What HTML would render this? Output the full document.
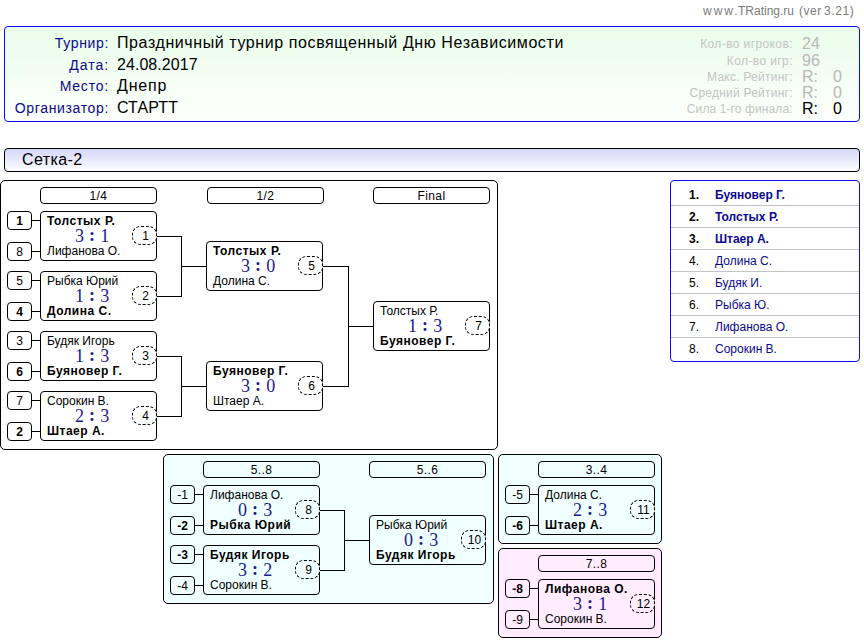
<!DOCTYPE html>
<html><head><meta charset="utf-8"><style>
*{margin:0;padding:0;box-sizing:border-box}
html,body{width:864px;height:642px;overflow:hidden;background:#fff;font-family:"Liberation Sans", sans-serif}
.a{position:absolute}
.t{position:absolute;white-space:nowrap;line-height:1}
.box{position:absolute;border:1px solid #000;border-radius:5px}
.lbl{position:absolute;border:1px solid #000;border-radius:4px;height:17px;width:117px;text-align:center;font-size:12px;line-height:17px;letter-spacing:0.4px;color:#000}
.seed{position:absolute;border:1px solid #000;border-radius:4px;width:25px;height:19px;text-align:center;font-size:12px;line-height:19px;color:#000;background:transparent}
.m{position:absolute;border:1px solid #000;border-radius:4px;width:117px;height:50px}
.n{position:absolute;left:6px;font-size:12px;line-height:12px;white-space:nowrap;color:#000}
.b{font-weight:bold;letter-spacing:0.5px}
.sc{position:absolute;left:34px;top:16px;font-family:"Liberation Serif", serif;font-size:18px;line-height:17px;letter-spacing:0.3px;color:#1a1a90;white-space:nowrap}
.no{position:absolute;left:91px;top:14px;width:25px;height:19px;border:1px dashed #000;border-radius:9px/8px;text-align:center;font-size:12px;line-height:19px;padding-left:2px;color:#000;background:#fff}
.c{position:relative;top:-1.5px}
.hl{position:absolute;height:1px;background:#000}
.vl{position:absolute;width:1px;background:#000}
</style></head>
<body>
<div class="t" style="left:703px;top:5px;font-size:12px;letter-spacing:2.0px;color:#7a7a7a">www.</div>
<div class="t" style="left:738px;top:5px;font-size:12px;letter-spacing:0.0px;color:#7a7a7a">TRating.ru</div>
<div class="t" style="left:799px;top:5px;font-size:12px;letter-spacing:0.5px;color:#7a7a7a">(ver</div>
<div class="t" style="left:824px;top:5px;font-size:12px;letter-spacing:0.6px;color:#7a7a7a">3.21)</div>
<div class="a" style="left:4px;top:26px;width:856px;height:96px;border:1px solid #0a0af8;border-radius:4px;background:linear-gradient(#e9fde9,#fdfffd)"></div>
<div class="t" style="right:755px;top:36.0px;font-size:14px;letter-spacing:0.65px;color:#0a0a8a;text-align:right">Турнир:</div>
<div class="t" style="left:117px;top:35.0px;font-size:16px;letter-spacing:0.59px;color:#000">Праздничный турнир посвященный Дню Независимости</div>
<div class="t" style="right:755px;top:57.5px;font-size:14px;letter-spacing:0.95px;color:#0a0a8a;text-align:right">Дата:</div>
<div class="t" style="left:117px;top:56.5px;font-size:16px;letter-spacing:0.05px;color:#000">24.08.2017</div>
<div class="t" style="right:755px;top:79.0px;font-size:14px;letter-spacing:0.8px;color:#0a0a8a;text-align:right">Место:</div>
<div class="t" style="left:117px;top:78.0px;font-size:16px;letter-spacing:0.8px;color:#000">Днепр</div>
<div class="t" style="right:755px;top:100.5px;font-size:14px;letter-spacing:0.65px;color:#0a0a8a;text-align:right">Организатор:</div>
<div class="t" style="left:117px;top:99.5px;font-size:16px;letter-spacing:0.1px;color:#000">СТАРТТ</div>
<div class="t" style="right:71.11px;top:38px;font-size:12px;letter-spacing:0.39px;color:#c4c4c4">Кол-во игроков:</div>
<div class="t" style="left:802px;top:36px;font-size:16px;color:#b8b8b8">24</div>
<div class="t" style="right:71.1px;top:55.4px;font-size:12px;letter-spacing:0.4px;color:#c4c4c4">Кол-во игр:</div>
<div class="t" style="left:802px;top:53.4px;font-size:16px;color:#b8b8b8">96</div>
<div class="t" style="right:71.25px;top:70.8px;font-size:12px;letter-spacing:0.25px;color:#c4c4c4">Макс. Рейтинг:</div>
<div class="t" style="left:802px;top:68.8px;font-size:16px;color:#b8b8b8">R:</div>
<div class="t" style="left:833px;top:68.8px;font-size:16px;color:#b8b8b8">0</div>
<div class="t" style="right:71.27px;top:87.2px;font-size:12px;letter-spacing:0.23px;color:#c4c4c4">Средний Рейтинг:</div>
<div class="t" style="left:802px;top:85.2px;font-size:16px;color:#b8b8b8">R:</div>
<div class="t" style="left:833px;top:85.2px;font-size:16px;color:#b8b8b8">0</div>
<div class="t" style="right:71.4px;top:103.2px;font-size:12px;letter-spacing:0.1px;color:#c4c4c4">Сила 1-го финала:</div>
<div class="t" style="left:802px;top:101.2px;font-size:16px;color:#000">R:</div>
<div class="t" style="left:833px;top:101.2px;font-size:16px;color:#000">0</div>
<div class="a" style="left:4px;top:148px;width:856px;height:24px;border:1px solid #000;border-radius:4px;background:linear-gradient(#d6d6f8,#fcfcff)"></div>
<div class="t" style="left:22px;top:152px;font-size:16px;letter-spacing:0.4px;color:#000">Сетка-2</div>
<div class="box" style="left:0px;top:180px;width:498px;height:270px;background:#fff"></div>
<div class="lbl" style="left:40px;top:187px">1/4</div>
<div class="lbl" style="left:207px;top:187px">1/2</div>
<div class="lbl" style="left:373px;top:187px">Final</div>
<div class="seed" style="left:7px;top:211px;font-weight:bold">1</div>
<div class="seed" style="left:7px;top:242px;">8</div>
<div class="hl" style="left:32px;top:220px;width:8px"></div>
<div class="hl" style="left:32px;top:251px;width:8px"></div>
<div class="m" style="left:40px;top:211px;background:#fff"><div class="n b" style="top:3px">Толстых Р.</div><div class="sc">3 <b class=c>:</b> 1</div><div class="n" style="top:33px">Лифанова О.</div><div class="no" style="background:#fff">1</div></div>
<div class="seed" style="left:7px;top:271px;">5</div>
<div class="seed" style="left:7px;top:302px;font-weight:bold">4</div>
<div class="hl" style="left:32px;top:280px;width:8px"></div>
<div class="hl" style="left:32px;top:311px;width:8px"></div>
<div class="m" style="left:40px;top:271px;background:#fff"><div class="n" style="top:3px">Рыбка Юрий</div><div class="sc">1 <b class=c>:</b> 3</div><div class="n b" style="top:33px">Долина С.</div><div class="no" style="background:#fff">2</div></div>
<div class="seed" style="left:7px;top:331px;">3</div>
<div class="seed" style="left:7px;top:362px;font-weight:bold">6</div>
<div class="hl" style="left:32px;top:340px;width:8px"></div>
<div class="hl" style="left:32px;top:371px;width:8px"></div>
<div class="m" style="left:40px;top:331px;background:#fff"><div class="n" style="top:3px">Будяк Игорь</div><div class="sc">1 <b class=c>:</b> 3</div><div class="n b" style="top:33px">Буяновер Г.</div><div class="no" style="background:#fff">3</div></div>
<div class="seed" style="left:7px;top:391px;">7</div>
<div class="seed" style="left:7px;top:422px;font-weight:bold">2</div>
<div class="hl" style="left:32px;top:400px;width:8px"></div>
<div class="hl" style="left:32px;top:431px;width:8px"></div>
<div class="m" style="left:40px;top:391px;background:#fff"><div class="n" style="top:3px">Сорокин В.</div><div class="sc">2 <b class=c>:</b> 3</div><div class="n b" style="top:33px">Штаер А.</div><div class="no" style="background:#fff">4</div></div>
<div class="hl" style="left:157px;top:236px;width:25px"></div>
<div class="hl" style="left:157px;top:296px;width:25px"></div>
<div class="vl" style="left:181px;top:236px;height:61px"></div>
<div class="hl" style="left:181px;top:266px;width:25px"></div>
<div class="hl" style="left:157px;top:356px;width:25px"></div>
<div class="hl" style="left:157px;top:416px;width:25px"></div>
<div class="vl" style="left:181px;top:356px;height:61px"></div>
<div class="hl" style="left:181px;top:386px;width:25px"></div>
<div class="m" style="left:206px;top:241px;background:#fff"><div class="n b" style="top:3px">Толстых Р.</div><div class="sc">3 <b class=c>:</b> 0</div><div class="n" style="top:33px">Долина С.</div><div class="no" style="background:#fff">5</div></div>
<div class="m" style="left:206px;top:361px;background:#fff"><div class="n b" style="top:3px">Буяновер Г.</div><div class="sc">3 <b class=c>:</b> 0</div><div class="n" style="top:33px">Штаер А.</div><div class="no" style="background:#fff">6</div></div>
<div class="hl" style="left:323px;top:266px;width:26px"></div>
<div class="hl" style="left:323px;top:386px;width:26px"></div>
<div class="vl" style="left:348px;top:266px;height:121px"></div>
<div class="hl" style="left:348px;top:326px;width:25px"></div>
<div class="m" style="left:373px;top:301px;background:#fff"><div class="n" style="top:3px">Толстых Р.</div><div class="sc">1 <b class=c>:</b> 3</div><div class="n b" style="top:33px">Буяновер Г.</div><div class="no" style="background:#fff">7</div></div>
<div class="a" style="left:670px;top:180px;width:190px;height:182px;border:1px solid #0a0af8;border-radius:4px;background:#fff"></div>
<div class="t" style="left:689px;top:189px;font-size:12px;font-weight:bold;color:#000">1.</div>
<div class="t" style="left:715px;top:189px;font-size:12px;font-weight:bold;color:#0a0a90">Буяновер Г.</div>
<div class="hl" style="left:671px;top:205px;width:188px;background:#c4c4c4"></div>
<div class="t" style="left:689px;top:211px;font-size:12px;font-weight:bold;color:#000">2.</div>
<div class="t" style="left:715px;top:211px;font-size:12px;font-weight:bold;color:#0a0a90">Толстых Р.</div>
<div class="hl" style="left:671px;top:227px;width:188px;background:#c4c4c4"></div>
<div class="t" style="left:689px;top:233px;font-size:12px;font-weight:bold;color:#000">3.</div>
<div class="t" style="left:715px;top:233px;font-size:12px;font-weight:bold;color:#0a0a90">Штаер А.</div>
<div class="hl" style="left:671px;top:249px;width:188px;background:#c4c4c4"></div>
<div class="t" style="left:689px;top:255px;font-size:12px;font-weight:normal;color:#000">4.</div>
<div class="t" style="left:715px;top:255px;font-size:12px;font-weight:normal;color:#0a0a90">Долина С.</div>
<div class="hl" style="left:671px;top:271px;width:188px;background:#c4c4c4"></div>
<div class="t" style="left:689px;top:277px;font-size:12px;font-weight:normal;color:#000">5.</div>
<div class="t" style="left:715px;top:277px;font-size:12px;font-weight:normal;color:#0a0a90">Будяк И.</div>
<div class="hl" style="left:671px;top:293px;width:188px;background:#c4c4c4"></div>
<div class="t" style="left:689px;top:299px;font-size:12px;font-weight:normal;color:#000">6.</div>
<div class="t" style="left:715px;top:299px;font-size:12px;font-weight:normal;color:#0a0a90">Рыбка Ю.</div>
<div class="hl" style="left:671px;top:315px;width:188px;background:#c4c4c4"></div>
<div class="t" style="left:689px;top:321px;font-size:12px;font-weight:normal;color:#000">7.</div>
<div class="t" style="left:715px;top:321px;font-size:12px;font-weight:normal;color:#0a0a90">Лифанова О.</div>
<div class="hl" style="left:671px;top:337px;width:188px;background:#c4c4c4"></div>
<div class="t" style="left:689px;top:343px;font-size:12px;font-weight:normal;color:#000">8.</div>
<div class="t" style="left:715px;top:343px;font-size:12px;font-weight:normal;color:#0a0a90">Сорокин В.</div>
<div class="box" style="left:163px;top:454px;width:331px;height:150px;background:#f0ffff"></div>
<div class="lbl" style="left:203px;top:461px">5..8</div>
<div class="lbl" style="left:369px;top:461px">5..6</div>
<div class="seed" style="left:170px;top:485px;">-1</div>
<div class="seed" style="left:170px;top:516px;font-weight:bold">-2</div>
<div class="hl" style="left:195px;top:494px;width:8px"></div>
<div class="hl" style="left:195px;top:525px;width:8px"></div>
<div class="m" style="left:203px;top:485px;background:#f0ffff"><div class="n" style="top:3px">Лифанова О.</div><div class="sc">0 <b class=c>:</b> 3</div><div class="n b" style="top:33px">Рыбка Юрий</div><div class="no" style="background:#f0ffff">8</div></div>
<div class="seed" style="left:170px;top:545px;font-weight:bold">-3</div>
<div class="seed" style="left:170px;top:576px;">-4</div>
<div class="hl" style="left:195px;top:554px;width:8px"></div>
<div class="hl" style="left:195px;top:585px;width:8px"></div>
<div class="m" style="left:203px;top:545px;background:#f0ffff"><div class="n b" style="top:3px">Будяк Игорь</div><div class="sc">3 <b class=c>:</b> 2</div><div class="n" style="top:33px">Сорокин В.</div><div class="no" style="background:#f0ffff">9</div></div>
<div class="hl" style="left:320px;top:510px;width:25px"></div>
<div class="hl" style="left:320px;top:570px;width:25px"></div>
<div class="vl" style="left:344px;top:510px;height:61px"></div>
<div class="hl" style="left:344px;top:540px;width:25px"></div>
<div class="m" style="left:369px;top:515px;background:#f0ffff"><div class="n" style="top:3px">Рыбка Юрий</div><div class="sc">0 <b class=c>:</b> 3</div><div class="n b" style="top:33px">Будяк Игорь</div><div class="no" style="background:#f0ffff">10</div></div>
<div class="box" style="left:498px;top:454px;width:164px;height:90px;background:#f0ffff"></div>
<div class="lbl" style="left:538px;top:461px">3..4</div>
<div class="seed" style="left:505px;top:485px;">-5</div>
<div class="seed" style="left:505px;top:516px;font-weight:bold">-6</div>
<div class="hl" style="left:530px;top:494px;width:8px"></div>
<div class="hl" style="left:530px;top:525px;width:8px"></div>
<div class="m" style="left:538px;top:485px;background:#f0ffff"><div class="n" style="top:3px">Долина С.</div><div class="sc">2 <b class=c>:</b> 3</div><div class="n b" style="top:33px">Штаер А.</div><div class="no" style="background:#f0ffff">11</div></div>
<div class="box" style="left:498px;top:548px;width:164px;height:90px;background:#ffedff"></div>
<div class="lbl" style="left:538px;top:555px">7..8</div>
<div class="seed" style="left:505px;top:579px;font-weight:bold">-8</div>
<div class="seed" style="left:505px;top:610px;">-9</div>
<div class="hl" style="left:530px;top:588px;width:8px"></div>
<div class="hl" style="left:530px;top:619px;width:8px"></div>
<div class="m" style="left:538px;top:579px;background:#ffedff"><div class="n b" style="top:3px">Лифанова О.</div><div class="sc">3 <b class=c>:</b> 1</div><div class="n" style="top:33px">Сорокин В.</div><div class="no" style="background:#ffedff">12</div></div>
</body></html>
